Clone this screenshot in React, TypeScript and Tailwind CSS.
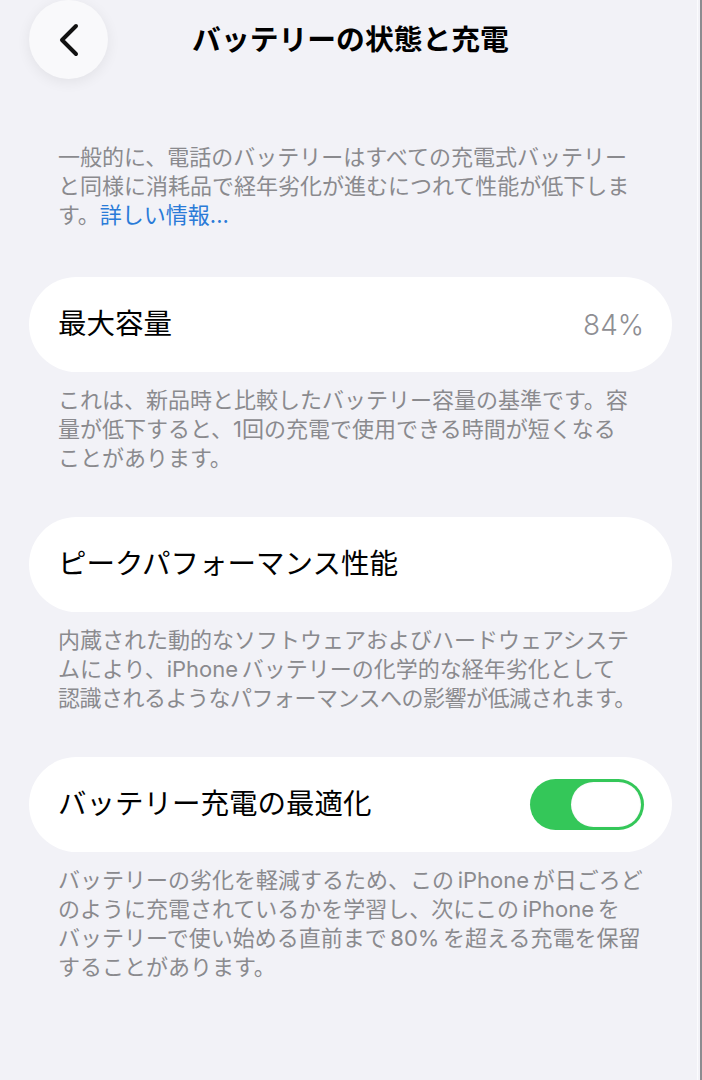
import React from "react";

const FONT = "font-['Inter','Noto_Sans_CJK_JP',sans-serif]";

function BackButton() {
  return (
    <button
      type="button"
      className="flex h-[79px] w-[79px] items-center justify-center rounded-full bg-[#f9f9fb] shadow-[0_3px_14px_rgba(0,0,0,0.07)]"
    >
      <svg width="22" height="34" viewBox="0 0 22 34" fill="none">
        <path
          d="M18 3 L4 17 L18 31"
          stroke="#111"
          strokeWidth="4"
          strokeLinecap="round"
          strokeLinejoin="round"
        />
      </svg>
    </button>
  );
}

function Toggle() {
  return (
    <div className="flex h-[51px] w-[114px] items-center justify-end rounded-full bg-[#34c759] p-[3px]">
      <div className="h-[45px] w-[70px] rounded-full bg-white shadow-[inset_0_0_2px_rgba(0,0,0,0.08)]" />
    </div>
  );
}

function Card({ children }: { children: React.ReactNode }) {
  return (
    <div className="flex h-[95px] items-center justify-between rounded-full bg-white pl-[29px] pr-[28px]">
      {children}
    </div>
  );
}

function Footnote({ children }: { children: React.ReactNode }) {
  return (
    <p className="mt-[14px] whitespace-nowrap pl-[29px] text-[22px] leading-[29px] text-[#8a8a8e]">
      {children}
    </p>
  );
}

export default function App() {
  return (
    <div className={`${FONT} flex min-h-[1080px] w-full bg-[#f2f2f7]`}>
      <main className="flex-1 pl-[29px] pr-[25px]">
        <header className="grid grid-cols-[1fr_auto_1fr] items-center">
          <div>
            <BackButton />
          </div>
          <h1 className="text-[28.8px] font-semibold text-black">
            バッテリーの状態と充電
          </h1>
          <div />
        </header>

        <p className="mt-[64px] whitespace-nowrap pl-[29px] text-[22px] leading-[29px] text-[#8a8a8e]">
          一般的に、電話のバッテリーはすべての充電式バッテリー
          <br />
          と同様に消耗品で経年劣化が進むにつれて性能が低下しま
          <br />
          す。<span className="text-[#2a7bd8]">詳しい情報...</span>
        </p>

        <div className="mt-[47px]">
          <Card>
            <span className="text-[28.5px] text-black">最大容量</span>
            <span className="text-[28px] font-light text-[#8e8e93]">84%</span>
          </Card>
        </div>
        <Footnote>
          これは、新品時と比較したバッテリー容量の基準です。容
          <br />
          量が低下すると、1回の充電で使用できる時間が短くなる
          <br />
          ことがあります。
        </Footnote>

        <div className="mt-[44px]">
          <Card>
            <span className="text-[28.5px] text-black">ピークパフォーマンス性能</span>
          </Card>
        </div>
        <Footnote>
          内蔵された動的なソフトウェアおよびハードウェアシステ
          <br />
          ムにより、iPhone{"\u2006"}バッテリーの化学的な経年劣化として
          <br />
          <span className="tracking-[-0.5px]">
            認識されるようなパフォーマンスへの影響が低減されます。
          </span>
        </Footnote>

        <div className="mt-[44px]">
          <Card>
            <span className="text-[28.5px] text-black">バッテリー充電の最適化</span>
            <Toggle />
          </Card>
        </div>
        <Footnote>
          バッテリーの劣化を軽減するため、この{"\u2006"}iPhone{"\u2006"}が日ごろど
          <br />
          のように充電されているかを学習し、次にこの{"\u2006"}iPhone{"\u2006"}を
          <br />
          バッテリーで使い始める直前まで{"\u2006"}80%{"\u2006"}を超える充電を保留
          <br />
          することがあります。
        </Footnote>
      </main>
      <div className="w-[1px] bg-[#fbfbfd]" />
      <div className="w-[2px]" />
      <div className="w-[2px] bg-[#8c8c90]" />
    </div>
  );
}
